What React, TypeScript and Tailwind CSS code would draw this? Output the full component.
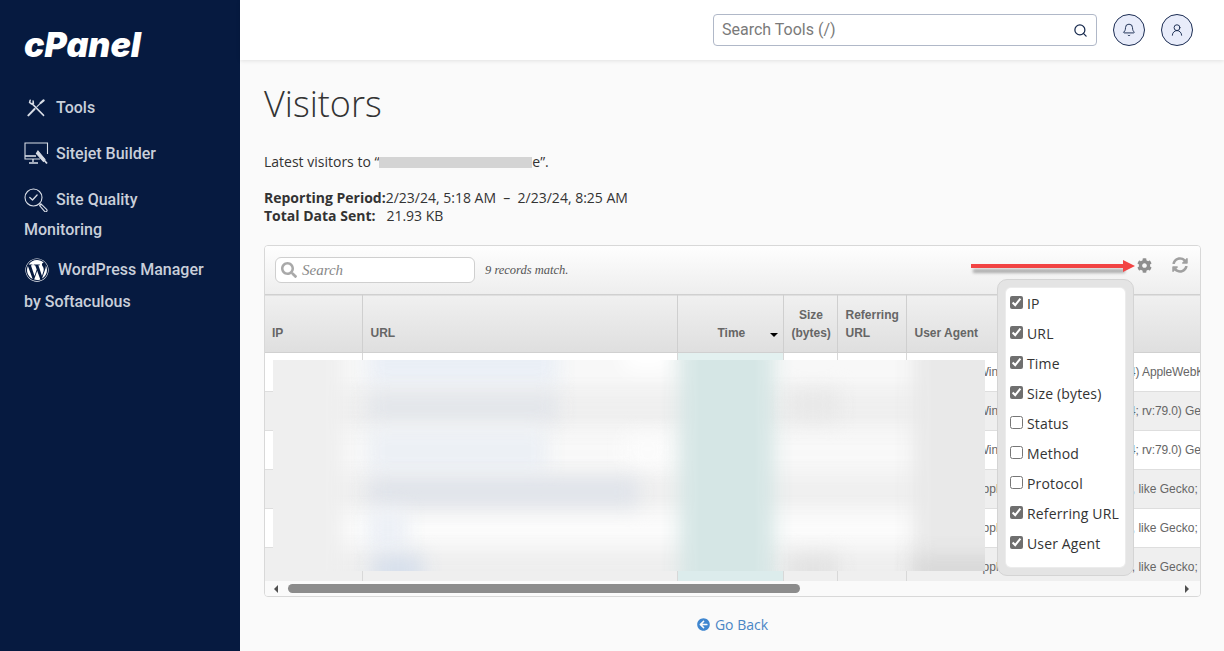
import { Bell, Search, UserRound } from "lucide-react";
import { FaArrowCircleLeft, FaCog, FaSearch, FaSyncAlt, FaWordpress } from "react-icons/fa";

const chrome = "Mozilla/5.0 (Windows NT 10.0; Win64; x64) AppleWebKit/537.36 (KHTML, like Gecko)";
const firefox = "Mozilla/5.0 (Windows NT 10.0; Win64; x64; rv:79.0) Gecko/20100101 Firefox/79.0";
const bot = "Mozilla/5.0 AppleWebKit/537.36 (KHTML, like Gecko; compatible; bingbot/2.0)";
const rows = [chrome, firefox, firefox, bot, bot, bot];

const columns = [
  { label: "IP", checked: true },
  { label: "URL", checked: true },
  { label: "Time", checked: true },
  { label: "Size (bytes)", checked: true },
  { label: "Status", checked: false },
  { label: "Method", checked: false },
  { label: "Protocol", checked: false },
  { label: "Referring URL", checked: true },
  { label: "User Agent", checked: true },
];

// redacted patches, left/top/width/height relative to the blurred block
const smudges = [
  { l: -30, t: -30, w: 780, h: 60, c: "#f8f8f8" },
  { l: -30, t: 30, w: 780, h: 40, c: "#efefef" },
  { l: -30, t: 72, w: 780, h: 42, c: "#f8f8f8" },
  { l: -30, t: 116, w: 780, h: 36, c: "#efefef" },
  { l: -30, t: 152, w: 780, h: 36, c: "#fbfbfb" },
  { l: -30, t: 192, w: 780, h: 50, c: "#eeeeee" },
  { l: -20, t: -20, w: 90, h: 260, c: "#efefef" },
  { l: 350, t: -20, w: 50, h: 30, c: "#ffffff" },
  { l: 350, t: 75, w: 50, h: 30, c: "#fcfcfc" },
  { l: 95, t: -20, w: 190, h: 45, c: "#eaeff6" },
  { l: 95, t: 32, w: 190, h: 30, c: "#e3e6eb" },
  { l: 95, t: 68, w: 180, h: 46, c: "#ecf0f5" },
  { l: 95, t: 118, w: 270, h: 28, c: "#dfe3ea" },
  { l: 95, t: 150, w: 40, h: 40, c: "#ecf0f6" },
  { l: 100, t: 195, w: 50, h: 30, c: "#d6dfec" },
  { l: 407, t: -20, w: 94, h: 260, c: "#d5e6e5" },
  { l: 515, t: 30, w: 50, h: 30, c: "#e8e8e8" },
  { l: 515, t: 195, w: 50, h: 30, c: "#e2e2e2" },
  { l: 640, t: -20, w: 100, h: 260, c: "#e9e9e9" },
  { l: 640, t: 195, w: 100, h: 30, c: "#d8d8d8" },
];

function ToolsIcon() {
  return (
    <svg viewBox="0 0 18 18" className="ml-[3px] h-[18px] w-[18px] shrink-0" fill="none" stroke="#d8dde6" strokeLinecap="round">
      <path d="M3.2 1.2 2.6 3.4l1.8 1.5 2-.6-.3-2.3M5 4.6 16.6 16.4" strokeWidth="1.5" />
      <path d="M16.6 1.4 13.6 4" strokeWidth="2.2" />
      <path d="M13.4 4.4 10 7.6" strokeWidth="1.1" />
      <path d="M7.6 10 1.4 16.4" strokeWidth="2" />
    </svg>
  );
}

function SitejetIcon() {
  return (
    <svg viewBox="0 0 25 24" className="h-6 w-[25px] shrink-0" fill="none" stroke="#d8dde6" strokeWidth="1.1">
      <path d="M16 17H1V1H23.5V12" />
      <path d="M1 14h11" strokeWidth="1.6" />
      <path d="M9 17v3M5 21h9" strokeWidth="1.4" />
      <path d="M14 9l7 8.5-1.6 2-7-8z" fill="#d8dde6" />
      <path d="M20 18l3 3.5" strokeWidth="1.8" />
    </svg>
  );
}

function QualityIcon() {
  return (
    <svg viewBox="0 0 24 24" className="h-6 w-6 shrink-0" fill="none" stroke="#d8dde6" strokeLinecap="round" strokeLinejoin="round">
      <circle cx="9.5" cy="9.5" r="8.5" strokeWidth="1.1" />
      <path d="M5.8 9.5 8.5 12l4.6-5" strokeWidth="1.3" />
      <path d="M15.6 15.6 17 17" strokeWidth="1.1" />
      <path d="M17 15.8 22.6 21.4a1.4 1.4 0 0 1-2 2L15.6 17.6z" strokeWidth="1.1" />
    </svg>
  );
}

export default function App() {
  return (
    <div className="flex h-[651px] w-[1224px] overflow-hidden bg-[#fafafa] font-['Open_Sans',sans-serif] text-[14px] text-[#333]">
      <aside className="w-[240px] shrink-0 bg-[#061a40] pl-6 font-['Roboto',sans-serif] text-[16px] font-medium text-[#c9cfda]">
        <div className="mt-[27px] h-[35px] font-['Inter',sans-serif] text-[34px] leading-[35px] font-black text-white italic">cPanel</div>
        <nav className="mt-[31px]">
          <div className="flex h-[30px] items-center gap-[11px]">
            <ToolsIcon />
            <span>Tools</span>
          </div>
          <div className="mt-[16px] flex h-[30px] items-center gap-[7px]">
            <SitejetIcon />
            <span>Sitejet Builder</span>
          </div>
          <div className="mt-[16px] flex h-[30px] items-center gap-[8px]">
            <QualityIcon />
            <span>Site Quality</span>
          </div>
          <div className="h-[30px] leading-[30px]">Monitoring</div>
          <div className="mt-[9px] flex h-[32px] items-center gap-[9px] pl-px">
            <FaWordpress className="h-6 w-6 text-white" />
            <span>WordPress Manager</span>
          </div>
          <div className="h-[32px] leading-[32px]">by Softaculous</div>
        </nav>
      </aside>

      <div className="flex min-w-0 flex-1 flex-col">
        <header className="flex h-[60px] shrink-0 items-center justify-end gap-[16px] bg-white pr-[31px] shadow-[0_1px_4px_rgba(0,0,0,0.1)]">
          <div className="flex h-[32px] w-[384px] items-center justify-between rounded-[4px] border border-[#b0b8c8] bg-white pr-[8px] pl-[8px] font-['Roboto',sans-serif] text-[16px] text-[#7a7a7a]">
            <span>Search Tools (/)</span>
            <Search className="h-[15px] w-[15px] text-[#16294d]" strokeWidth={2} />
          </div>
          <div className="flex h-[32px] w-[32px] items-center justify-center rounded-full border border-[#1b2c52] bg-[#e8ecfa]">
            <Bell className="h-[14px] w-[14px] text-[#16294d]" strokeWidth={1.6} />
          </div>
          <div className="flex h-[32px] w-[32px] items-center justify-center rounded-full border border-[#1b2c52] bg-[#e8ecfa]">
            <UserRound className="h-[14px] w-[14px] text-[#16294d]" strokeWidth={1.6} />
          </div>
        </header>

        <main className="flex-1 pr-[23px] pl-[24px]">
          <h1 className="mt-[19px] h-[50px] text-[36px] leading-[50px] font-light text-[#333]">Visitors</h1>
          <p className="mt-[23px] flex h-[20px] items-center leading-[20px]">
            Latest visitors to “<span className="h-[11px] w-[153px] bg-[#d4d4d4]" />e”.
          </p>
          <div className="mt-[17px] leading-[18px]">
            <div>
              <b className="font-bold">Reporting Period:</b>2/23/24, 5:18 AM &nbsp;–&nbsp; 2/23/24, 8:25 AM
            </div>
            <div>
              <b className="font-bold">Total Data Sent:</b>&nbsp;&nbsp; 21.93 KB
            </div>
          </div>

          <section className="relative mt-[20px] h-[352px] w-[937px] overflow-hidden rounded-[4px] border border-[#d8d8d8] bg-[#fafafa]">
            <div className="flex h-[48px] items-center bg-gradient-to-b from-[#fefefe] to-[#eeeeee] pr-[11px] pl-[10px]">
              <div className="flex h-[26px] w-[200px] items-center gap-[5px] rounded-[6px] border border-[#cfcfcf] bg-white pl-[5px]">
                <FaSearch className="h-[16px] w-[16px] text-[#a9a9a9]" />
                <span className="font-['Liberation_Serif',serif] text-[15px] text-[#888] italic">Search</span>
              </div>
              <span className="ml-[10px] font-['Liberation_Serif',serif] text-[12.5px] text-[#555] italic">9 records match.</span>
              <FaCog className="mr-[20px] ml-auto h-[15px] w-[15px] -translate-x-px -translate-y-[5px] text-[#8f8f8f]" />
              <FaSyncAlt className="h-[16px] w-[16px] -translate-x-px -translate-y-[5px] text-[#a0a0a0]" />
            </div>

            <div className="h-[287px] overflow-hidden">
              <table className="w-[1100px] table-fixed border-collapse font-['Liberation_Sans',sans-serif] text-[12px] text-[#666]">
                <colgroup>
                  <col className="w-[97px]" />
                  <col className="w-[315px]" />
                  <col className="w-[106px]" />
                  <col className="w-[54px]" />
                  <col className="w-[69px]" />
                  <col />
                </colgroup>
                <thead>
                  <tr className="h-[58px] border-y border-[#d0d0d0] bg-gradient-to-b from-[#f0f0f0] to-[#dfdfdf] text-left align-bottom leading-[18px] font-bold">
                    <th className="border-r border-[#cfcfcf] px-[7px] pb-[10px]">IP</th>
                    <th className="border-r border-[#cfcfcf] px-[8px] pb-[10px]">URL</th>
                    <th className="relative border-r border-[#cfcfcf] pr-[7px] pb-[10px] pl-[40px]">
                      Time
                      <span className="absolute right-[5px] bottom-[15px] h-0 w-0 border-x-[4px] border-t-[4px] border-x-transparent border-t-black" />
                    </th>
                    <th className="border-r border-[#cfcfcf] pr-[6px] pb-[10px] pl-[8px] text-center">Size (bytes)</th>
                    <th className="border-r border-[#cfcfcf] px-[8px] pb-[10px]">Referring URL</th>
                    <th className="px-[8px] pb-[10px]">User Agent</th>
                  </tr>
                </thead>
                <tbody>
                  {rows.map((agent, i) => (
                    <tr key={i} className={`h-[39px] border-b border-[#dedede] ${i % 2 ? "bg-[#efefef]" : "bg-white"}`}>
                      <td className="border-r border-[#d8d8d8]" />
                      <td className="border-r border-[#d8d8d8]" />
                      <td className={`border-r border-[#d8d8d8] ${i % 2 ? "bg-[#dcecec]" : "bg-[#e3f1f0]"}`} />
                      <td className="border-r border-[#d8d8d8]" />
                      <td className="border-r border-[#d8d8d8]" />
                      <td className={`px-[8px] whitespace-nowrap ${i < 3 ? "tracking-[-0.12px]" : ""}`}>{agent}</td>
                    </tr>
                  ))}
                </tbody>
              </table>
            </div>

            {/* horizontal scrollbar */}
            <div className="flex h-[15px] items-center bg-[#fafafa]">
              <span className="ml-[9px] h-0 w-0 border-y-[4px] border-r-[4px] border-y-transparent border-r-[#505050]" />
              <span className="ml-[10px] h-[9px] w-[512px] rounded-full bg-[#8c8c8c]" />
              <span className="mr-[11px] ml-auto h-0 w-0 border-y-[4px] border-l-[4px] border-y-transparent border-l-[#505050]" />
            </div>

            {/* blurred block over the table */}
            <div className="absolute top-[114px] left-[8px] h-[211px] w-[712px] overflow-hidden bg-[#f6f6f6]">
              {smudges.map((s, i) => (
                <div
                  key={i}
                  className="absolute blur-[10px]"
                  style={{ left: s.l, top: s.t, width: s.w, height: s.h, backgroundColor: s.c }}
                />
              ))}
            </div>

            {/* column picker */}
            <div className="absolute top-[33px] left-[732px] h-[297px] w-[137px] rounded-[10px] border border-[#d4d4d4] bg-[#e4e4e4] p-[8px]">
              <div className="h-[279px] rounded-[5px] bg-white pl-[4px] tracking-[0.15px] text-[#333] shadow-[0_0_0_1px_#ececec]">
                {columns.map((c) => (
                  <label key={c.label} className="flex h-[30px] items-center gap-[4px] whitespace-nowrap">
                    <input type="checkbox" defaultChecked={c.checked} className="m-0 h-[13px] w-[13px] -translate-y-px accent-[#6f6f6f]" />
                    <span>{c.label}</span>
                  </label>
                ))}
              </div>
            </div>

            {/* annotation arrow */}
            <svg className="absolute top-[12px] left-[706px] h-[20px] w-[166px] overflow-visible" viewBox="0 0 166 20">
              <path d="M1 10h152" stroke="#000" strokeOpacity="0.3" strokeWidth="4" transform="translate(1 3)" className="blur-[1.5px]" />
              <path d="M0 8h155" stroke="#f24444" strokeWidth="4" />
              <path d="M152 2 164 8 152 14z" fill="#f24444" />
            </svg>
          </section>

          <div className="mt-[17px] flex items-center justify-center gap-[5px] text-[#4a86c5]">
            <FaArrowCircleLeft className="h-[13px] w-[13px] text-[#3f86cf]" />
            <span>Go Back</span>
          </div>
        </main>
      </div>
    </div>
  );
}
